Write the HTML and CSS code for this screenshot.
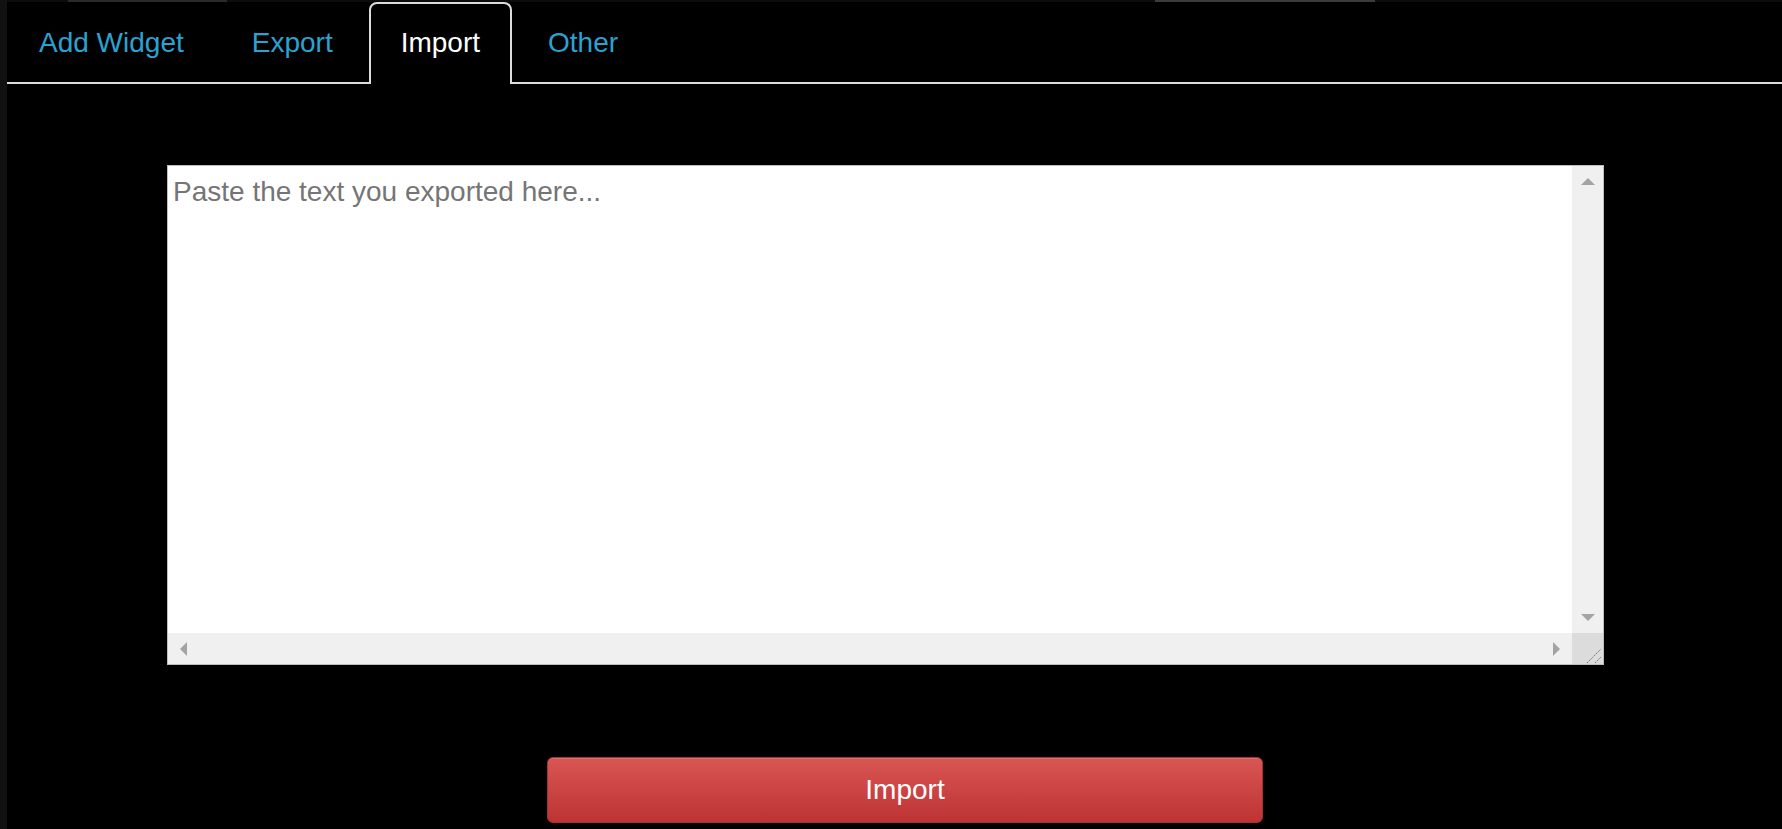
FILE: index.html
```html
<!DOCTYPE html>
<html lang="en">
<head>
<meta charset="utf-8">
<title>Import</title>
<link rel="stylesheet" href="styles.css">
</head>
<body>
<div class="page">
  <div class="side-strip"></div>
  <main class="main">
    <div class="top-strip"></div>
    <ul class="tabs">
      <li class="tab"><a href="#">Add Widget</a></li>
      <li class="tab"><a href="#">Export</a></li>
      <li class="tab active"><a href="#">Import</a></li>
      <li class="tab"><a href="#">Other</a></li>
    </ul>
    <div class="field">
      <textarea class="input" placeholder="Paste the text you exported here..."></textarea>
      <div class="vbar">
        <div class="sbtn"><svg width="14" height="7" viewBox="0 0 14 7"><polygon points="7,0 14,7 0,7" fill="#a3a3a3"/></svg></div>
        <div class="sbtn"><svg width="14" height="7" viewBox="0 0 14 7"><polygon points="0,0 14,0 7,7" fill="#a3a3a3"/></svg></div>
      </div>
      <div class="hbar">
        <div class="sbtn"><svg width="7" height="14" viewBox="0 0 7 14"><polygon points="7,0 7,14 0,7" fill="#a3a3a3"/></svg></div>
        <div class="sbtn"><svg width="7" height="14" viewBox="0 0 7 14"><polygon points="0,0 7,7 0,14" fill="#a3a3a3"/></svg></div>
      </div>
      <div class="corner"><svg width="31" height="31" viewBox="0 0 31 31"><line x1="15" y1="30" x2="29" y2="16" stroke="#6a6a6a" stroke-width="1" stroke-dasharray="1.5 1"/><line x1="23" y1="30" x2="29" y2="24" stroke="#6a6a6a" stroke-width="1" stroke-dasharray="1.5 1"/></svg></div>
    </div>
    <button class="import-btn" type="button">Import</button>
  </main>
</div>
</body>
</html>
```

FILE: styles.css
```css
html, body {
  margin: 0;
  padding: 0;
  background: #000;
  height: 100%;
  overflow: hidden;
}

.page {
  display: flex;
  height: 829px;
  font-family: "Liberation Sans", Arial, sans-serif;
}

.side-strip {
  width: 7px;
  flex: 0 0 7px;
  background: #121111;
}

.main {
  flex: 1;
  display: flex;
  flex-direction: column;
  align-items: flex-start;
}

.top-strip {
  align-self: stretch;
  height: 2px;
  background: linear-gradient(to right,
    #0c0c0c 0, #0c0c0c 61px,
    #2a2a2a 61px, #2a2a2a 220px,
    #0c0c0c 220px, #0c0c0c 1148px,
    #3c3c3c 1148px, #3c3c3c 1368px,
    #0c0c0c 1368px);
}

.tabs {
  align-self: stretch;
  list-style: none;
  margin: 0;
  padding: 0;
  display: flex;
  border-bottom: 2px solid #dcdcdc;
  height: 80px;
}

.tab {
  margin-right: 4px;
  margin-bottom: -2px;
  border: 2px solid transparent;
  border-bottom: 0;
  border-radius: 8px 8px 0 0;
  background: transparent;
  height: 82px;
  box-sizing: border-box;
}

.tab a {
  display: block;
  padding: 0 30px 2px;
  line-height: 78px;
  font-size: 28px;
  color: #2aa3d3;
  text-decoration: none;
}

.tab.active {
  border-color: #dcdcdc;
  background: #000;
}

.tab.active a {
  color: #fff;
}

.field {
  margin-top: 81px;
  margin-left: 160px;
  width: 1437px;
  height: 500px;
  box-sizing: border-box;
  border: 1px solid #bdbdbd;
  background: #fff;
  display: grid;
  grid-template-columns: 1fr 31px;
  grid-template-rows: 1fr 31px;
}

.input {
  border: 0;
  outline: none;
  resize: none;
  overflow: hidden;
  margin: 0;
  padding: 10px 5px 6px;
  font-family: "Liberation Sans", Arial, sans-serif;
  font-size: 28px;
  color: #333;
  background: #fff;
}

.input::placeholder {
  color: #757575;
}

.vbar {
  background: #f0f0f0;
  display: flex;
  flex-direction: column;
  justify-content: space-between;
}

.hbar {
  background: #f0f0f0;
  display: flex;
  justify-content: space-between;
}

.sbtn {
  width: 31px;
  height: 31px;
  display: flex;
  align-items: center;
  justify-content: center;
}

.sbtn svg {
  display: block;
}

.corner {
  background: #dcdcdc;
}

.corner svg {
  display: block;
}

.import-btn {
  margin-top: 92px;
  margin-left: 540px;
  width: 716px;
  height: 66px;
  border: 1px solid #a83030;
  border-radius: 6px;
  background: linear-gradient(to bottom, #d85654 0%, #bd3333 100%);
  box-shadow: inset 0 1px 0 rgba(255, 255, 255, 0.15);
  color: #fff;
  font-family: "Liberation Sans", Arial, sans-serif;
  font-size: 28px;
  padding: 0;
  cursor: pointer;
}
```
